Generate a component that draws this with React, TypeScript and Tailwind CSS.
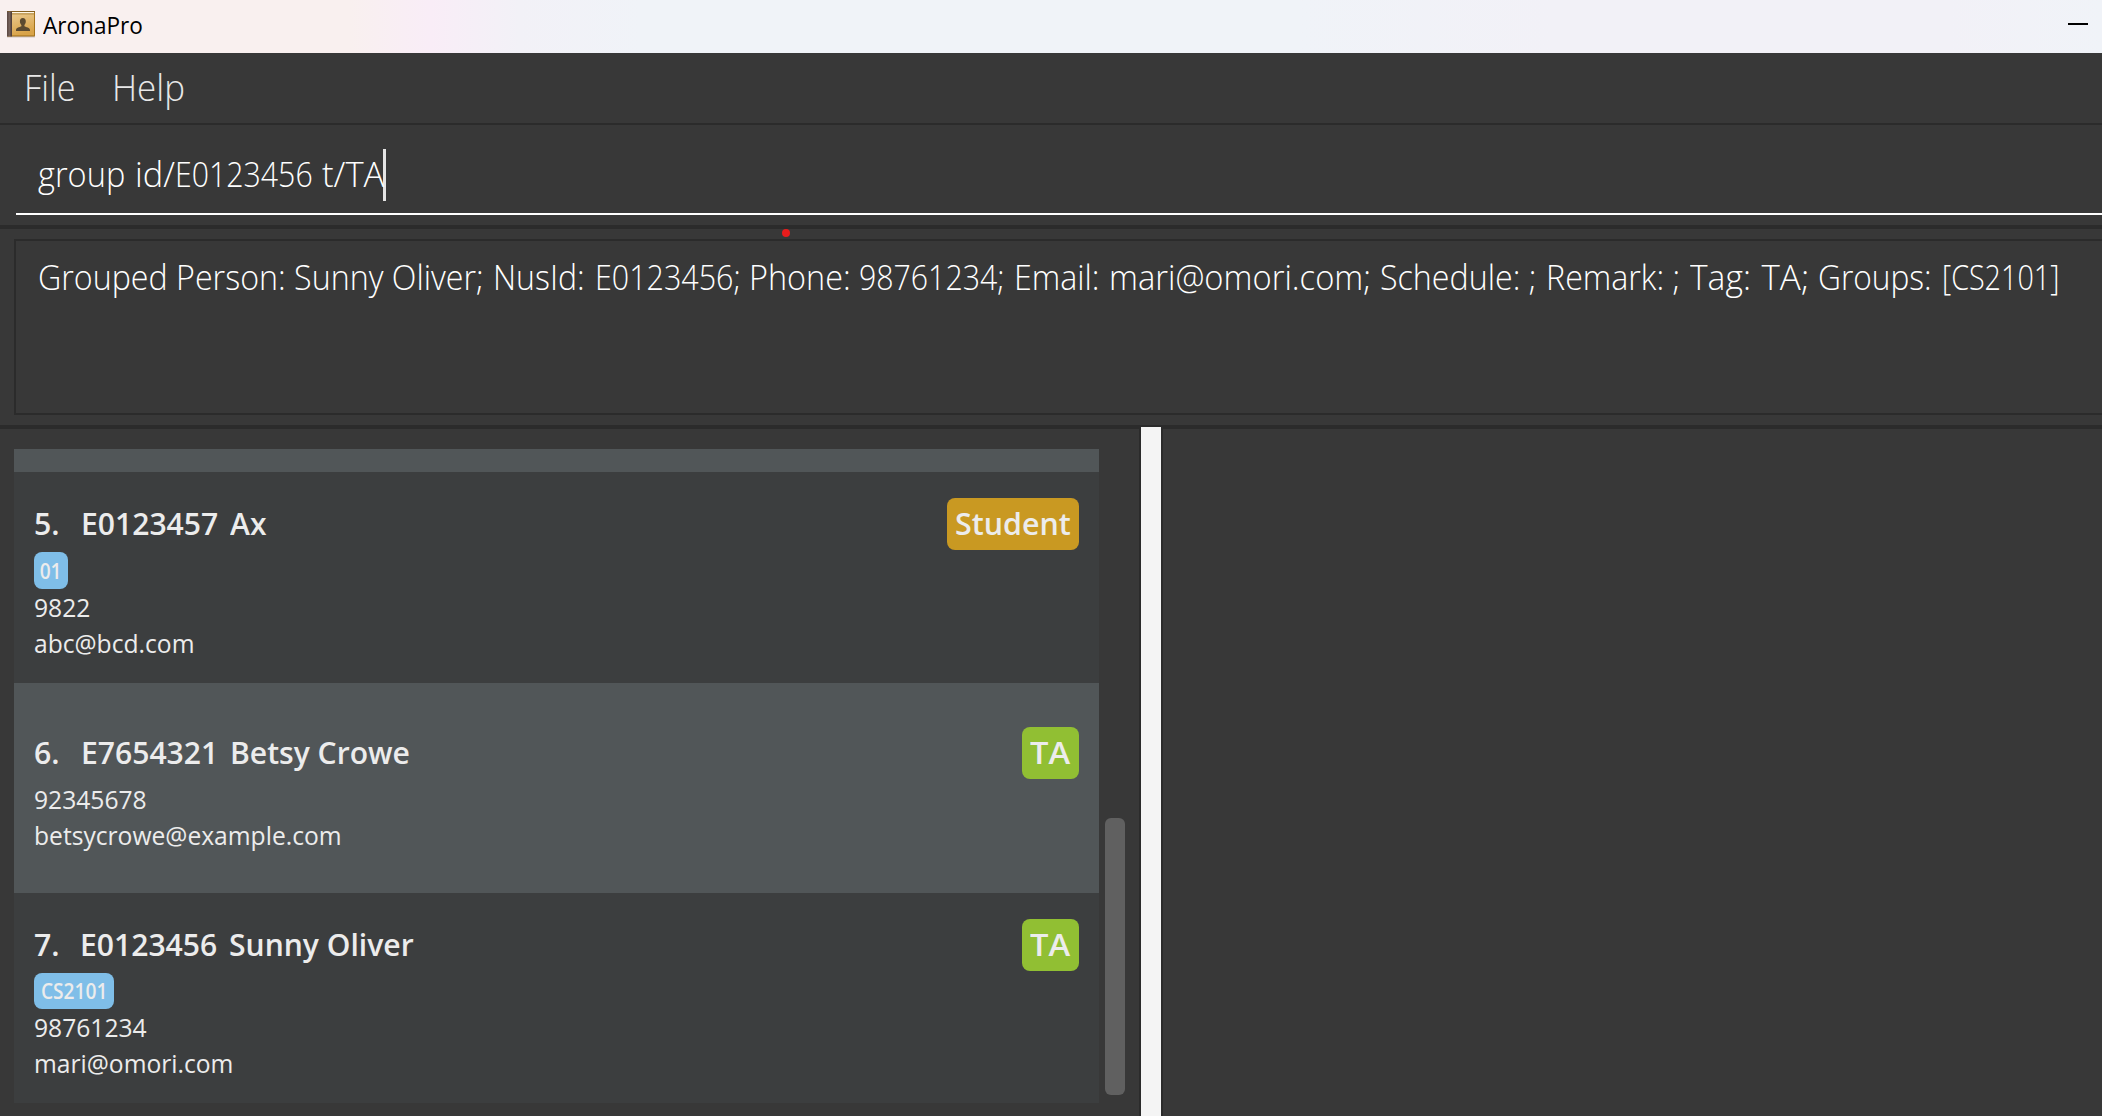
type Person = {
  index: number;
  id: string;
  name: string;
  role: 'Student' | 'TA';
  group?: string;
  phone: string;
  email: string;
};

const people: Person[] = [
  { index: 5, id: 'E0123457', name: 'Ax', role: 'Student', group: '01', phone: '9822', email: 'abc@bcd.com' },
  { index: 6, id: 'E7654321', name: 'Betsy Crowe', role: 'TA', phone: '92345678', email: 'betsycrowe@example.com' },
  { index: 7, id: 'E0123456', name: 'Sunny Oliver', role: 'TA', group: 'CS2101', phone: '98761234', email: 'mari@omori.com' },
];

type Segment = { text: string; width: string; scale: string };

const command: Segment[] = [
  { text: 'group', width: 'w-[97px]', scale: 'scale-x-[0.93]' },
  { text: 'id/', width: 'w-[40px]', scale: 'scale-x-[0.98]' },
  { text: 'E0123456', width: 'w-[146.5px]', scale: 'scale-x-[0.865]' },
  { text: 't/TA', width: 'w-[61.5px]', scale: 'scale-x-[0.99]' },
];

const result: Segment[] = [
  { text: 'Grouped Person: Sunny Oliver;', width: 'w-[454.5px]', scale: 'scale-x-[0.92]' },
  { text: 'NusId:', width: 'w-[102px]', scale: 'scale-x-[0.915]' },
  { text: 'E0123456;', width: 'w-[154px]', scale: 'scale-x-[0.87]' },
  { text: 'Phone:', width: 'w-[110.5px]', scale: 'scale-x-[0.925]' },
  { text: '98761234;', width: 'w-[154.5px]', scale: 'scale-x-[0.865]' },
  { text: 'Email:', width: 'w-[95px]', scale: 'scale-x-[0.92]' },
  { text: 'mari@omori.com;', width: 'w-[271px]', scale: 'scale-x-[0.935]' },
  { text: 'Schedule: ;', width: 'w-[166px]', scale: 'scale-x-[0.92]' },
  { text: 'Remark: ;', width: 'w-[144px]', scale: 'scale-x-[0.92]' },
  { text: 'Tag:', width: 'w-[72px]', scale: 'scale-x-[0.96]' },
  { text: 'TA;', width: 'w-[56px]', scale: 'scale-x-[1]' },
  { text: 'Groups:', width: 'w-[124px]', scale: 'scale-x-[0.905]' },
  { text: '[CS2101]', width: 'w-[120px]', scale: 'scale-x-[0.82]' },
];

function Segments({ items }: { items: Segment[] }) {
  return (
    <>
      {items.map((s, i) => (
        <span key={i} className={`shrink-0 whitespace-nowrap ${s.width}`}>
          <span className={`inline-block origin-left ${s.scale}`}>{s.text}</span>
        </span>
      ))}
    </>
  );
}

function BookIcon() {
  return (
    <svg width="30" height="30" viewBox="0 0 30 30" className="shrink-0">
      <defs>
        <linearGradient id="cover" x1="0" y1="0" x2="0.3" y2="1">
          <stop offset="0" stopColor="#e9c88c" />
          <stop offset="1" stopColor="#d9a348" />
        </linearGradient>
        <linearGradient id="spine" x1="0" y1="0" x2="1" y2="0">
          <stop offset="0" stopColor="#5a4640" />
          <stop offset="0.5" stopColor="#75625b" />
          <stop offset="1" stopColor="#4a3935" />
        </linearGradient>
      </defs>
      <rect x="1" y="26" width="28" height="1.5" fill="#cfc3c1" />
      <rect x="1" y="1" width="28" height="25.5" rx="0.8" fill="#a4731c" />
      <rect x="1" y="1" width="28" height="1" fill="#84601f" />
      <rect x="5" y="2" width="23" height="1.4" fill="#fff6e4" />
      <rect x="5" y="3.4" width="23" height="1" fill="#c4a05c" />
      <rect x="5.5" y="4.4" width="22.5" height="21" fill="url(#cover)" />
      <rect x="1" y="1.5" width="5" height="25" fill="url(#spine)" />
      <path
        d="M16.8 8c2 0 3 1.4 3 3.3 0 1.600-.5 2.800-1.400 3.600v1.300c1.700.9 5.600 1.400 5.600 3.800v1H10v-1c0-2.400 3.700-2.900 5.400-3.800v-1.300c-.9-.8-1.500-2-1.500-3.600C13.900 9.400 14.900 8 16.800 8Z"
        fill="#5b4a30"
      />
    </svg>
  );
}

function RoleBadge({ role }: { role: Person['role'] }) {
  const isTA = role === 'TA';
  return (
    <span
      className={`flex h-[52px] rounded-lg pl-2 leading-[50px] whitespace-nowrap ${
        isTA ? 'w-[57px] bg-[#91bf33]' : 'w-[132px] bg-[#c99922]'
      }`}
    >
      <span className={`inline-block origin-left ${isTA ? 'scale-x-[1.04]' : 'scale-x-[0.965]'}`}>{role}</span>
    </span>
  );
}

function PersonCard({ person }: { person: Person }) {
  const { index, id, name, role, group, phone, email } = person;
  const longGroup = !!group && group.length > 2;
  return (
    <div
      className={`shrink-0 px-5 text-[#ececec] ${group ? 'bg-[#3c3e3f] pt-[26px]' : 'bg-[#515658] pt-11'} ${
        group && !longGroup ? 'h-[211px]' : 'h-[210px]'
      }`}
    >
      <div className="flex h-[52px] items-start text-[31.5px] leading-[50px] font-semibold whitespace-nowrap">
        <span className={longGroup ? 'w-[46px]' : 'w-[47px]'}>
          <span className="inline-block origin-left scale-x-[0.96]">{index}.</span>
        </span>
        <span className={longGroup ? 'w-[149px]' : 'w-[148.5px]'}>
          <span className="inline-block origin-left scale-x-[0.955]">{id}</span>
        </span>
        <span className="flex-1">
          <span className="inline-block origin-left scale-x-[0.955]">{name}</span>
        </span>
        <RoleBadge role={role} />
      </div>
      <div className="mt-0.5">
        {group && (
          <span
            className={`flex justify-center rounded-lg bg-[#7fbee8] text-[22px] font-semibold ${
              longGroup ? 'h-9 w-20 leading-[34px]' : 'h-[37px] w-[34px] leading-[37px]'
            }`}
          >
            <span className="inline-block scale-x-[0.87]">{group}</span>
          </span>
        )}
        <div className="text-[25px] leading-9">
          <span className="inline-block origin-left scale-x-[0.985]">{phone}</span>
        </div>
        <div className="text-[25px] leading-9">
          <span className="inline-block origin-left scale-x-[0.985]">{email}</span>
        </div>
      </div>
    </div>
  );
}

export default function App() {
  return (
    <div className="flex h-[1116px] w-[2102px] flex-col overflow-hidden bg-[#383838] font-['Open_Sans','Noto_Sans',sans-serif]">
      <header className="flex h-[53px] shrink-0 items-start bg-[linear-gradient(90deg,#f9f0ef_0px,#f9f0ef_350px,#f9edf7_430px,#f2f1f7_520px,#f0f3f8_640px,#f0f3f8_1300px,#f2f1f7_1550px,#f2f1f7_1950px,#f0f3f8_2102px)] pr-3.5 pl-1.5 text-black">
        <span className="mt-2.5">
          <BookIcon />
        </span>
        <span className="ml-[7px] inline-block origin-left scale-x-[0.96] text-[23.5px] leading-[50px]">AronaPro</span>
        <span className="mt-[23px] ml-auto h-0.5 w-5 bg-black" />
      </header>

      <nav className="flex h-[72px] shrink-0 border-b-2 border-[#2b2b2b] pl-[23.5px] text-4xl font-light text-[#e8e8e8]">
        <span className="w-[88.5px] leading-[70px]">
          <span className="inline-block origin-left scale-x-[0.95]">File</span>
        </span>
        <span className="inline-block origin-left scale-x-[0.97] leading-[70px]">Help</span>
      </nav>

      <section className="relative h-[104px] shrink-0 border-b-4 border-[#2b2b2b] pl-4">
        <div className="flex h-[90px] border-b-2 border-white pt-6 pl-[22px] text-[35px] leading-[50px] font-light text-white">
          <Segments items={command} />
          <span className="h-[52px] w-[3px] bg-[#e4e4e4]" />
        </div>
        <span className="absolute top-[103.5px] left-[782px] size-2 rounded-full bg-[#e81c1c]" />
      </section>

      <section className="h-[200px] shrink-0 border-b-4 border-[#2b2b2b] pt-2.5 pl-3.5">
        <div className="flex h-[176px] border-y-2 border-l-2 border-[#2b2b2b] pt-3 pl-[22px] text-[35px] leading-[48px] font-light text-white">
          <Segments items={result} />
        </div>
      </section>

      <main className="flex min-h-0 flex-1">
        <section className="flex w-[1139px] pt-5 pl-3.5">
          <div className="flex w-[1085px] flex-col">
            <div className="h-[23px] shrink-0 bg-[#515658]" />
            {people.map((person) => (
              <PersonCard key={person.index} person={person} />
            ))}
          </div>
          <div className="mt-[369px] ml-1.5 h-[277px] w-5 rounded-md bg-[#606060]" />
        </section>
        <div className="-mt-0.5 w-6 border-x-2 border-[#2b2b2b] bg-[#f4f4f4]" />
        <section className="flex-1" />
      </main>
    </div>
  );
}
